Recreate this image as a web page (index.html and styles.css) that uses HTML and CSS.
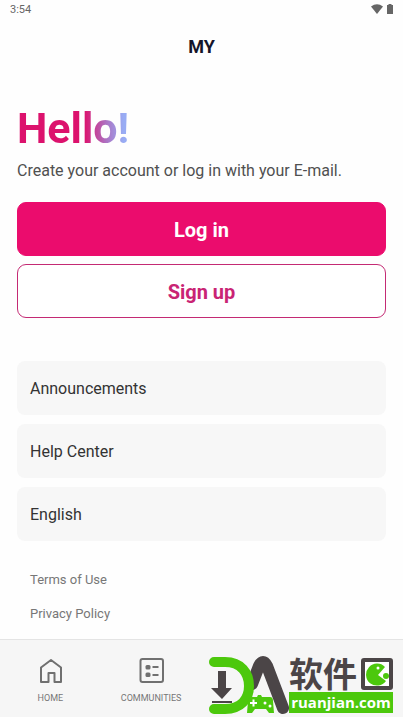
FILE: index.html
```html
<!DOCTYPE html>
<html lang="en">
<head>
<meta charset="utf-8">
<meta name="viewport" content="width=device-width, initial-scale=1">
<title>MY</title>
<link rel="stylesheet" href="styles.css">
</head>
<body>
<div class="status">
  <span>3:54</span>
  <span class="status-icons">
    <svg width="12" height="10" viewBox="0 0 12 10" aria-hidden="true"><path d="M0 2.500Q6-1.800 12 2.500L6 10Z" fill="#666"/></svg>
    <svg width="6" height="10" viewBox="0 0 6 10" aria-hidden="true"><path d="M0 1h1.500V0h3v1H6v9H0Z" fill="#666"/></svg>
  </span>
</div>
<header class="title-bar"><h1>MY</h1></header>
<main>
  <h2 class="hello">Hello!</h2>
  <p class="intro">Create your account or log in with your E-mail.</p>
  <div class="actions">
    <button class="btn btn-primary" type="button">Log in</button>
    <button class="btn btn-outline" type="button">Sign up</button>
  </div>
  <div class="menu">
    <a href="#announcements">Announcements</a>
    <a href="#help">Help Center</a>
    <a href="#language">English</a>
  </div>
  <div class="legal">
    <a href="#terms">Terms of Use</a>
    <a href="#privacy">Privacy Policy</a>
  </div>
</main>
<nav class="tabs">
  <a href="#home">
    <svg width="28" height="28" viewBox="0 0 28 28" fill="none" stroke="#707070" stroke-width="2" stroke-linejoin="round" aria-hidden="true"><path d="M5 10.500 15 3l10 7.500V25h-6.500v-9h-6v9H5Z"/></svg>
    <span>HOME</span>
  </a>
  <a href="#communities">
    <svg width="28" height="28" viewBox="0 0 28 28" fill="none" stroke="#707070" stroke-width="2" aria-hidden="true"><rect x="3.500" y="2" width="22.500" height="23" rx="2"/><path d="M15.500 10h6M15.500 18h6"/><g fill="#707070" stroke="none"><rect x="8.500" y="8" width="5" height="4.500" rx="1.500"/><rect x="8.500" y="15.500" width="5" height="4.500" rx="1.500"/></g></svg>
    <span>COMMUNITIES</span>
  </a>
</nav>
<div class="badge">
  <svg class="badge-mark" width="80" height="59" viewBox="0 0 80 59" aria-hidden="true">
    <path d="M43 28 50 10Q54 2 58 10L74 52" fill="none" stroke="#4b4547" stroke-width="12" stroke-linecap="round" stroke-linejoin="round"/>
    <path d="M5 6H16C32 6 40 17 40 30S32 53 16 53H5" fill="none" stroke="#4cc80c" stroke-width="10" stroke-linecap="round"/>
    <path d="M9 15h8v17h6L13 43 2 32h7ZM3 45h20v2H3Z" fill="#4b4547"/>
    <path d="M43 41h5l1-2h3l1 2h8q3 0 3 4l1 12h-5l-3-4H46l-3 4h-5l1-12q1-4 4-4Z" fill="#4cc80c"/>
    <path d="M41 47h7M44.500 43.500v7" stroke="#fff" stroke-width="2"/>
    <circle cx="56" cy="47" r="1.500" fill="#fff"/><circle cx="61" cy="50" r="1.500" fill="#fff"/>
  </svg>
  <div class="badge-words">
    <div class="badge-name">
      <span lang="zh-CN">软件</span>
      <svg width="32" height="32" viewBox="0 0 32 32" aria-hidden="true"><rect x="2" y="2" width="28" height="28" rx="1" fill="#fff" stroke="#4b4547" stroke-width="4"/><path d="M24 9A11 11 0 1 0 25 23L17 17Z" fill="#4cc80c"/><circle cx="25" cy="18" r="3" fill="#4cc80c"/><circle cx="17" cy="10" r="1.500" fill="#fff"/></svg>
    </div>
    <div class="badge-site">ruanjian.com</div>
  </div>
</div>
</body>
</html>
```
FILE: styles.css
```css
* { box-sizing: border-box; }
body {
  margin: 0;
  min-height: 100vh;
  display: flex;
  flex-direction: column;
  position: relative;
  background: #fefefe;
  color: #333;
  font-family: Roboto, "Liberation Sans", sans-serif;
}
h1, h2, p { margin: 0; }
a { color: inherit; text-decoration: none; }
svg { display: block; }
.status {
  display: flex;
  justify-content: space-between;
  align-items: center;
  height: 18px;
  padding: 0 10px;
  font-size: 11px;
  color: #666;
}
.status-icons { display: flex; gap: 4px; }
.title-bar {
  height: 58px;
  display: flex;
  align-items: center;
  justify-content: center;
}
.title-bar h1 { font-size: 18px; line-height: 24px; font-weight: 700; color: #15152a; }
main { flex: 1; padding: 24px 17px 0; }
.hello {
  width: max-content;
  font-size: 43px;
  line-height: 56px;
  font-weight: 700;
  background: linear-gradient(90deg, #dc126d 60%, #ac74c4 80%, #98acf4 95%);
  background-clip: text;
  -webkit-background-clip: text;
  color: transparent;
}
.intro { margin-top: 3px; font-size: 16px; line-height: 24px; color: #505050; }
.actions { display: grid; gap: 8px; margin-top: 19px; }
.btn {
  height: 54px;
  padding: 2px 0 0;
  border: 1px solid #eb0c6d;
  border-radius: 9px;
  font-family: inherit;
  font-size: 20px;
  font-weight: 700;
}
.btn-primary { background: #eb0c6d; color: #fff; }
.btn-outline { background: #fff; border-color: #c42a74; color: #c92474; }
.menu { display: grid; gap: 9px; margin-top: 43px; }
.menu a {
  height: 54px;
  padding: 1px 13px 0;
  display: flex;
  align-items: center;
  border-radius: 8px;
  background: #f7f7f7;
  font-size: 16px;
}
.legal {
  display: grid;
  gap: 10px;
  margin-top: 27px;
  padding: 0 13px;
  font-size: 13px;
  line-height: 24px;
  color: #777;
}
.tabs {
  height: 78px;
  display: grid;
  grid-template-columns: repeat(4, 1fr);
  border-top: 1px solid #e4e4e4;
  background: #f6f6f6;
  font-size: 9px;
  line-height: 12px;
  color: #777;
}
.tabs a {
  display: flex;
  flex-direction: column;
  align-items: center;
  gap: 7px;
  padding-top: 17px;
}
.badge {
  position: absolute;
  right: 10px;
  bottom: 2px;
  display: flex;
  align-items: flex-start;
}
.badge-words { width: 104px; }
.badge-name {
  display: flex;
  justify-content: space-between;
  height: 36px;
  padding-top: 2px;
  color: #4b4547;
  font: 700 34px/30px "Noto Sans CJK SC", sans-serif;
}
.badge-site {
  height: 21px;
  background: #4cc80c;
  color: #fff;
  text-align: center;
  font: 700 15px/20px "Open Sans", sans-serif;
}
```
